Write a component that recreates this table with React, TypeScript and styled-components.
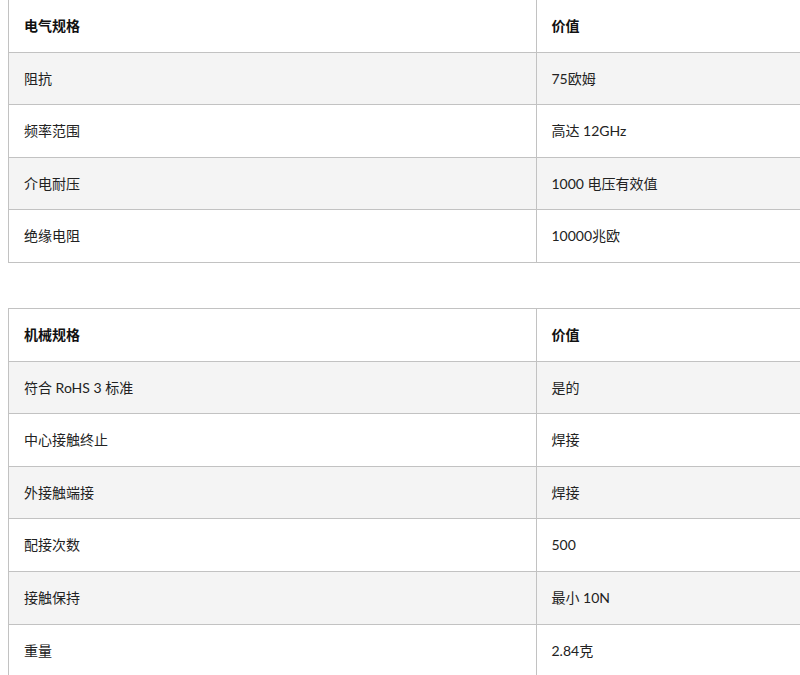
import React from "react";
import styled, { createGlobalStyle } from "styled-components";

const Global = createGlobalStyle`
  html, body {
    margin: 0;
    padding: 0;
    overflow: hidden;
    background: #ffffff;
  }
  body {
    font-family: Lato, "Noto Sans CJK SC", sans-serif;
    font-size: 14px;
    color: #222222;
  }
`;

const Page = styled.div`
  display: flex;
  flex-direction: column;
  gap: 45px;
  padding: 0 0 0 8px;
  margin-top: -1px;
`;

const Table = styled.table`
  width: 1056px;
  border-collapse: collapse;
  table-layout: fixed;
  border: 1px solid #c2c2c2;
`;

const Row = styled.tr<{ $shade?: boolean }>`
  background: ${(p) => (p.$shade ? "#f4f4f4" : "#ffffff")};
`;

const Cell = styled.td<{ $head?: boolean }>`
  width: 50%;
  border: 1px solid #c2c2c2;
  padding: 16px 15px;
  line-height: 1.4;
  text-align: left;
  vertical-align: middle;
  font-weight: ${(p) => (p.$head ? 700 : 400)};
  color: ${(p) => (p.$head ? "#111111" : "#222222")};
`;

type Spec = { title: string; rows: [string, string][] };

const specs: Spec[] = [
  {
    title: "电气规格",
    rows: [
      ["阻抗", "75欧姆"],
      ["频率范围", "高达 12GHz"],
      ["介电耐压", "1000 电压有效值"],
      ["绝缘电阻", "10000兆欧"],
    ],
  },
  {
    title: "机械规格",
    rows: [
      ["符合 RoHS 3 标准", "是的"],
      ["中心接触终止", "焊接"],
      ["外接触端接", "焊接"],
      ["配接次数", "500"],
      ["接触保持", "最小 10N"],
      ["重量", "2.84克"],
    ],
  },
];

export default function App() {
  return (
    <>
      <Global />
      <Page>
        {specs.map((s) => (
          <Table key={s.title}>
            <tbody>
              <Row>
                <Cell $head>{s.title}</Cell>
                <Cell $head>价值</Cell>
              </Row>
              {s.rows.map(([k, v], i) => (
                <Row key={k} $shade={i % 2 === 0}>
                  <Cell>{k}</Cell>
                  <Cell>{v}</Cell>
                </Row>
              ))}
            </tbody>
          </Table>
        ))}
      </Page>
    </>
  );
}
